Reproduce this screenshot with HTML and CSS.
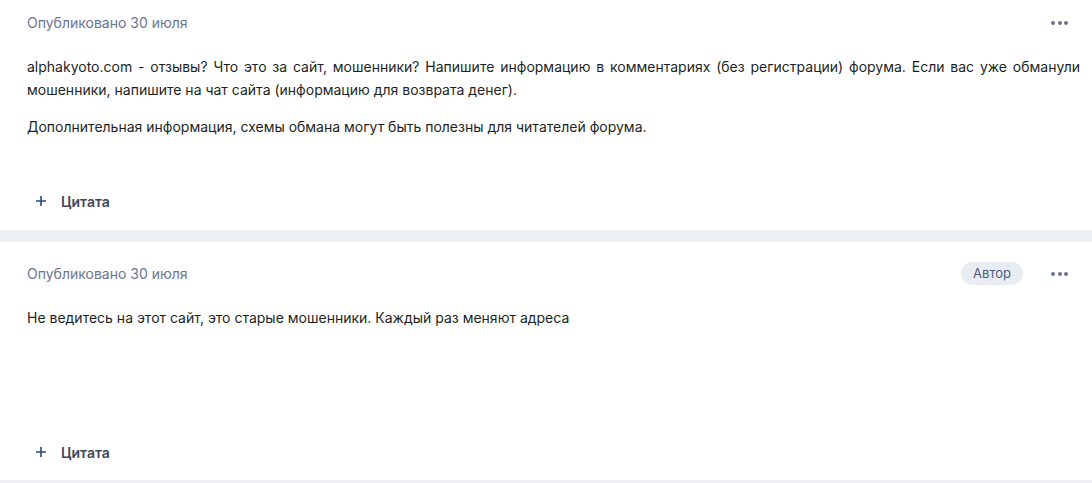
FILE: index.html
```html
<!DOCTYPE html>
<html lang="ru">
<head>
    <meta charset="UTF-8">
    <meta name="viewport" content="width=device-width, initial-scale=1.0">
    <title>alphakyoto.com - отзывы</title>
    <link rel="stylesheet" href="styles.css">
</head>
<body>
    <div class="topic">
        <article class="post post-first">
            <div class="post-head">
                <span class="post-date">Опубликовано 30 июля</span>
                <div class="post-tools">
                    <button class="more-btn" aria-label="Ещё"><i></i><i></i><i></i></button>
                </div>
            </div>
            <div class="post-content">
                <p>alphakyoto.com - отзывы? Что это за сайт, мошенники? Напишите информацию в комментариях (без регистрации) форума. Если вас уже обманули мошенники, напишите на чат сайта (информацию для возврата денег).</p>
                <p>Дополнительная информация, схемы обмана могут быть полезны для читателей форума.</p>
            </div>
            <div class="post-actions">
                <button class="quote-btn">
                    <svg width="12" height="12" viewBox="0 0 12 12"><path d="M6 1v10M1 6h10" stroke="#2f4a75" stroke-width="1.6" fill="none"/></svg>
                    <span>Цитата</span>
                </button>
            </div>
        </article>
        <article class="post">
            <div class="post-head">
                <span class="post-date">Опубликовано 30 июля</span>
                <div class="post-tools">
                    <span class="badge">Автор</span>
                    <button class="more-btn" aria-label="Ещё"><i></i><i></i><i></i></button>
                </div>
            </div>
            <div class="post-content">
                <p>Не ведитесь на этот сайт, это старые мошенники. Каждый раз меняют адреса</p>
            </div>
            <div class="post-actions">
                <button class="quote-btn">
                    <svg width="12" height="12" viewBox="0 0 12 12"><path d="M6 1v10M1 6h10" stroke="#2f4a75" stroke-width="1.6" fill="none"/></svg>
                    <span>Цитата</span>
                </button>
            </div>
        </article>
    </div>
</body>
</html>
```

FILE: styles.css
```css
body {
    margin: 0;
    padding: 0;
    background: #eef0f4;
    font-family: Inter, 'Noto Sans', sans-serif;
    color: #1d1f24;
}
.topic {
    display: flex;
    flex-direction: column;
    gap: 12px;
}
.post {
    background: #fff;
    padding: 20px 12px 18px 27px;
}
.post-first {
    padding-top: 11px;
    padding-bottom: 19px;
}
.post-head {
    display: flex;
    align-items: center;
    justify-content: space-between;
    height: 23px;
}
.post-date {
    font-size: 14px;
    color: #6b7590;
}
.post-tools {
    display: flex;
    align-items: center;
    gap: 28px;
    margin-right: 12px;
}
.badge {
    background: #e9edf3;
    color: #4a5b7d;
    font-size: 13px;
    line-height: 23px;
    padding: 0 12px;
    border-radius: 12px;
}
.more-btn {
    display: flex;
    gap: 2.5px;
    border: none;
    background: none;
    padding: 0;
    cursor: pointer;
}
.more-btn i {
    width: 4px;
    height: 4px;
    border-radius: 50%;
    background: #6b7590;
}
.post-content {
    margin-top: 21px;
    min-height: 136px;
    font-size: 14px;
    line-height: 23px;
}
.post-content p {
    margin: 0 0 14px;
    text-align: justify;
}
.post-content p:last-child {
    margin-bottom: 0;
}
.quote-btn {
    display: flex;
    align-items: center;
    gap: 14px;
    height: 20px;
    margin-left: 8px;
    padding: 0;
    border: none;
    background: none;
    font-family: inherit;
    font-size: 14px;
    font-weight: 600;
    color: #3d4759;
    cursor: pointer;
}
```
